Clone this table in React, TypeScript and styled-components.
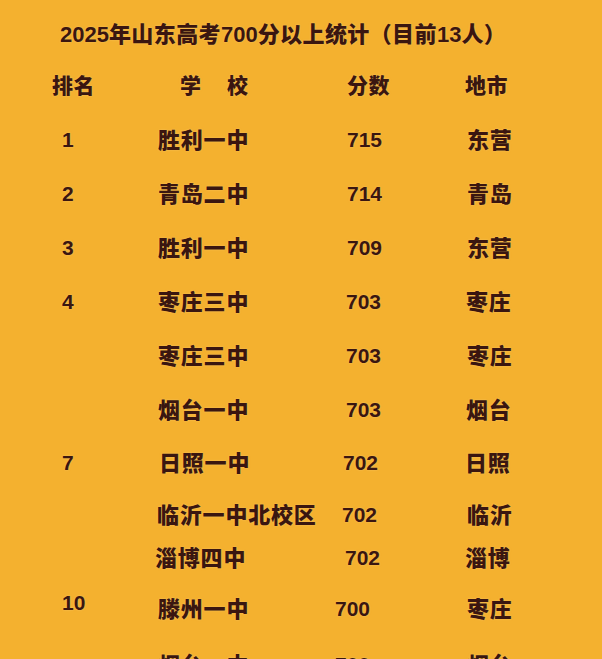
import React from "react";
import styled, { createGlobalStyle } from "styled-components";

const GlobalStyle = createGlobalStyle`
  html, body {
    margin: 0;
    padding: 0;
    background: #f4b12f;
  }
  #root {
    width: 602px;
    height: 659px;
    overflow: hidden;
  }
`;

const Page = styled.div`
  width: 602px;
  height: 659px;
  overflow: hidden;
  background: #f4b12f;
  color: #3a1610;
  font-family: "Noto Sans CJK SC", "Noto Sans", sans-serif;
  font-weight: 900;
  text-shadow: 0 0 2px rgba(255, 214, 140, 0.55);
`;

const Title = styled.h1`
  margin: 0;
  height: 57px;
  padding: 18px 0 0 60px;
  box-sizing: border-box;
  font-size: 22px;
  line-height: 28px;
  letter-spacing: 0.4px;
  font-weight: 900;
  white-space: nowrap;
`;

const Num = styled.span`
  font-family: "Liberation Sans", Arial, sans-serif;
  font-weight: 700;
  letter-spacing: 0;
`;

const Row = styled.div<{ $h: number }>`
  display: grid;
  grid-template-columns: 96px 188px 120px 1fr;
  align-items: center;
  height: ${(p) => p.$h}px;
  padding-left: 62px;
  box-sizing: border-box;
`;

const Cell = styled.div<{ $dx?: number; $dy?: number }>`
  margin-left: ${(p) => p.$dx ?? 0}px;
  transform: translateY(${(p) => p.$dy ?? 0}px);
  white-space: nowrap;
  line-height: 28px;
`;

const HeadText = styled(Cell)<{ $spread?: boolean }>`
  font-size: 21px;
  letter-spacing: ${(p) => (p.$spread ? "2.5px" : "0.5px")};
`;

const Digits = styled(Cell)`
  font-family: "Liberation Sans", Arial, sans-serif;
  font-weight: 700;
  font-size: 21px;
  padding-top: 4px;
`;

const Rank = styled(Digits)``;

const Score = styled(Digits)``;

const School = styled(Cell)`
  font-size: 22px;
  letter-spacing: 0.8px;
`;

const City = styled(Cell)`
  font-size: 22px;
  letter-spacing: 0.8px;
`;

type Entry = {
  rank?: string;
  rankDy?: number;
  school: string;
  schoolDx?: number;
  score: string;
  scoreDx: number;
  city: string;
  cityDx: number;
  h: number;
};

const rows: Entry[] = [
  { rank: "1", school: "胜利一中", score: "715", scoreDx: 1, city: "东营", cityDx: 1, h: 54 },
  { rank: "2", school: "青岛二中", score: "714", scoreDx: 1, city: "青岛", cityDx: 1, h: 54 },
  { rank: "3", school: "胜利一中", score: "709", scoreDx: 1, city: "东营", cityDx: 1, h: 54 },
  { rank: "4", school: "枣庄三中", score: "703", scoreDx: 0, city: "枣庄", cityDx: 0, h: 54 },
  { school: "枣庄三中", score: "703", scoreDx: 0, city: "枣庄", cityDx: 1, h: 54 },
  { school: "烟台一中", score: "703", scoreDx: 0, city: "烟台", cityDx: 0, h: 54 },
  { rank: "7", school: "日照一中", schoolDx: 1, score: "702", scoreDx: -3, city: "日照", cityDx: -1, h: 52 },
  { school: "临沂一中北校区", schoolDx: -1, score: "702", scoreDx: -4, city: "临沂", cityDx: 1, h: 51 },
  { school: "淄博四中", schoolDx: -3, score: "702", scoreDx: -1, city: "淄博", cityDx: -1, h: 36 },
  { rank: "10", rankDy: -6, school: "滕州一中", score: "700", scoreDx: -11, city: "枣庄", cityDx: 1, h: 66 },
  { school: "烟台一中", score: "700", scoreDx: -11, city: "烟台", cityDx: 1, h: 46 },
];

export default function App() {
  return (
    <>
      <GlobalStyle />
      <Page>
        <Title>
          <Num>2025</Num>年山东高考<Num>700</Num>分以上统计（目前<Num>13</Num>人）
        </Title>
        <Row $h={54}>
          <HeadText $dx={-10}>排名</HeadText>
          <HeadText $dx={22} $spread>
            学　校
          </HeadText>
          <HeadText $dx={1}>分数</HeadText>
          <HeadText $dx={-1}>地市</HeadText>
        </Row>
        {rows.map((r, i) => (
          <Row key={i} $h={r.h}>
            <Rank $dy={r.rankDy}>{r.rank ?? ""}</Rank>
            <School $dx={r.schoolDx}>{r.school}</School>
            <Score $dx={r.scoreDx}>{r.score}</Score>
            <City $dx={r.cityDx}>{r.city}</City>
          </Row>
        ))}
      </Page>
    </>
  );
}
